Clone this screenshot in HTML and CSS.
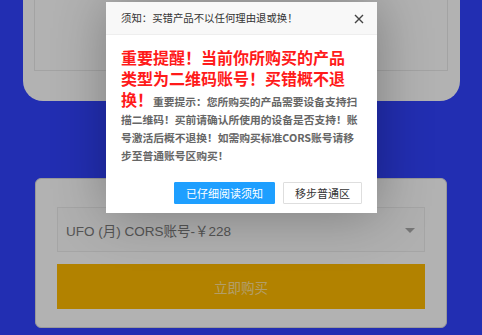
FILE: index.html
```html
<!DOCTYPE html>
<html lang="zh-CN">
<head>
<meta charset="utf-8">
<title>须知</title>
<link rel="stylesheet" href="styles.css">
</head>
<body>
<div class="page">
  <div class="top-card">
    <div class="top-inner"></div>
  </div>
  <div class="buy-card">
    <div class="select">
      <span class="select-text">UFO (月) CORS账号-￥228</span>
      <span class="caret"></span>
    </div>
    <div class="buy-btn">立即购买</div>
  </div>
</div>
<div class="shade"></div>
<div class="layer">
  <div class="layer-title">须知：买错产品不以任何理由退或换！
    <svg class="close" width="10" height="10" viewBox="0 0 10 10"><path d="M1 1L9 9M9 1L1 9" stroke="#444" stroke-width="1.4" fill="none"/></svg>
  </div>
  <div class="layer-content"><span class="warn">重要提醒！当前你所购买的产品类型为二维码账号！买错概不退换！</span>重要提示：您所购买的产品需要设备支持扫描二维码！买前请确认所使用的设备是否支持！账号激活后概不退换！如需购买标准CORS账号请移步至普通账号区购买！</div>
  <div class="layer-btns">
    <span class="btn btn-primary">已仔细阅读须知</span><span class="btn btn-plain">移步普通区</span>
  </div>
</div>
</body>
</html>
```
FILE: styles.css
```css
html, body {
  margin: 0;
  padding: 0;
}
body {
  background: #3142ff;
  font-family: "Noto Sans CJK SC", sans-serif;
  width: 482px;
  height: 335px;
  overflow: hidden;
  position: relative;
}
.page {
  display: flex;
  flex-direction: column;
}
.top-card {
  margin-left: 23px;
  width: 437px;
  height: 101px;
  background: #fff;
  border-radius: 0 0 20px 20px;
  box-sizing: border-box;
  padding: 0 12px 0 11px;
}
.top-inner {
  height: 71px;
  box-sizing: border-box;
  border: 1px solid #eaeaea;
  border-top: none;
}
.buy-card {
  margin: 77px 0 0 35px;
  width: 412px;
  height: 150px;
  box-sizing: border-box;
  background: #fff;
  border: 1px solid #dcdcdc;
  border-radius: 6px;
  padding: 28px 21px 0 21px;
  display: flex;
  flex-direction: column;
  gap: 12px;
}
.select {
  height: 45px;
  box-sizing: border-box;
  border: 1px solid #ececec;
  background: #fcfcfc;
  display: flex;
  align-items: center;
  justify-content: space-between;
  padding: 0 9px 0 8px;
}
.select-text {
  font-family: "Liberation Sans", "Noto Sans CJK SC", sans-serif;
  font-size: 13.5px;
  color: #7a7a7a;
}
.caret {
  width: 0;
  height: 0;
  border-left: 5px solid transparent;
  border-right: 5px solid transparent;
  border-top: 5px solid #aaa;
  margin-top: 2px;
}
.buy-btn {
  height: 45px;
  background: #ffbb00;
  color: rgba(255, 255, 255, 0.6);
  font-size: 13.5px;
  display: flex;
  align-items: center;
  justify-content: center;
}
.shade {
  position: absolute;
  inset: 0;
  background: rgba(0, 0, 0, 0.3);
}
.layer {
  position: absolute;
  left: 106px;
  top: 2px;
  width: 271px;
  background: #fff;
  box-shadow: 1px 1px 50px rgba(0, 0, 0, 0.3);
}
.layer-title {
  position: relative;
  height: 33px;
  box-sizing: border-box;
  line-height: 32px;
  padding-left: 15px;
  background: #f8f8f8;
  border-bottom: 1px solid #eee;
  color: #333;
  font-size: 10.4px;
}
.close {
  position: absolute;
  right: 13px;
  top: 12px;
}
.layer-content {
  padding: 13px 19px 0 15px;
  font-size: 10.75px;
  font-weight: bold;
  color: #666;
  line-height: 18px;
}
.warn {
  color: #ff1a1a;
  font-size: 16px;
  line-height: 18px;
}
.layer-btns {
  display: flex;
  justify-content: flex-end;
  gap: 8px;
  padding: 17px 15px 9px;
}
.btn {
  height: 22px;
  box-sizing: border-box;
  line-height: 20px;
  padding: 0 11px;
  font-size: 11px;
  border: 1px solid #dedede;
  border-radius: 1px;
}
.btn-primary {
  background: #1e9fff;
  border-color: #1e9fff;
  color: #fff;
}
.btn-plain {
  background: #fff;
  color: #333;
}
```
